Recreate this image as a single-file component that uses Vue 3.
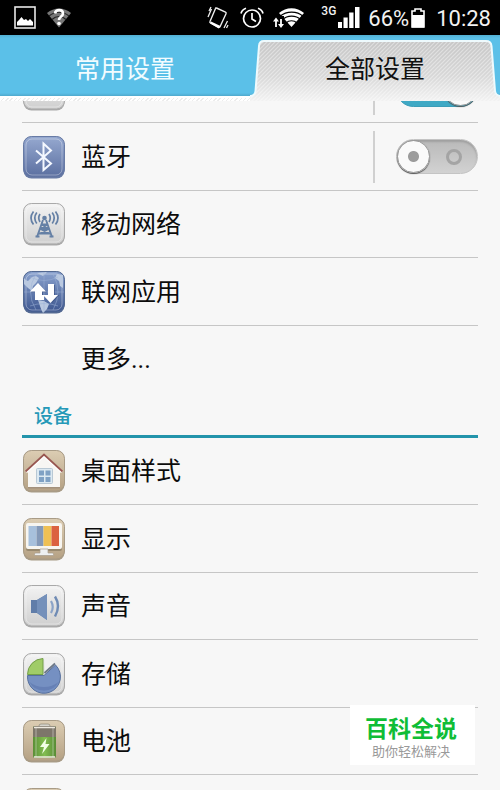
<template>
  <div class="phone">
    <header class="status-bar">
      <div class="status-left">
        <svg width="22" height="23" viewBox="0 0 22 23">
          <rect x="1" y="1" width="20" height="21" fill="none" stroke="#e8e8e8" stroke-width="1.6" />
          <path d="M3 19.500V16l2-2 2.500-3 2.500 3 2-1 2 2 2-2 3 3v3.500z" fill="#fff" />
        </svg>
        <svg width="24" height="20" viewBox="0 0 24 20">
          <path d="M0 5C7-1 17-1 24 5L12 19.500z" fill="#777" />
          <path d="M2 8c6-5 14-5 20 0M5 11.500c4-4 10-4 14 0" fill="none" stroke="#222" stroke-width="1.200" />
          <path d="M8 5.500c.5-4.500 8-4.500 8 0 0 3-4 3-4 6.500" fill="none" stroke="#fff" stroke-width="2.600" />
          <circle cx="12" cy="15.500" r="1.800" fill="#fff" />
        </svg>
      </div>
      <div class="status-right">
        <svg class="icon-vibrate" width="22" height="26" viewBox="0 0 22 26" fill="none" stroke="#eee">
          <path d="M9.500 3l9 4.200q1 .5.500 1.500l-6 13q-.5 1-1.500.5l-8-4.200q-1-.5-.5-1.500l5.500-13q.3-.9 1-.5z" stroke-width="1.400" />
          <path d="M4 16.500l9.500 4.500-1.700 2.500-8.600-5z" fill="#fff" stroke="none" />
          <path d="M1 12l3.500-8M2 6l2-4M17 23l3.500-7M19.500 23l1.500-3" stroke-width="1.300" />
        </svg>
        <svg class="icon-alarm" width="24" height="22" viewBox="0 0 24 22" fill="none" stroke="#fff" stroke-width="1.700">
          <circle cx="12" cy="11.500" r="8.500" />
          <path d="M12 6v6l4 2.500M1 6.500Q2 2.500 6 1.200M23 6.500Q22 2.500 18 1.200" />
        </svg>
        <svg class="icon-wifi" width="32" height="20" viewBox="0 0 32 20">
          <path d="M6 5C13-1.500 24-1.500 31 5L18.500 19z" fill="#fff" />
          <path d="M7 8.200c6.500-5.500 17-5.500 23 0M10 11.500c4-4.500 13-4.500 17.500 0M13 15c3-3 8-3 11 0" fill="none" stroke="#000" stroke-width="1.200" />
          <path d="M0 8h11v12H0z" fill="#000" />
          <path d="M3 19v-7M8 11v7" stroke="#fff" stroke-width="1.800" />
          <path d="M0 13.500l3-4 3 4zM5 16h6l-3 4z" fill="#fff" />
        </svg>
        <span class="network">3G</span>
        <svg class="icon-signal" width="22" height="21" viewBox="0 0 22 21" fill="#fff">
          <path d="M0 15h4v6H0zM5.500 10.500h4.200V21H5.500zM11.200 5.500h4.300V21h-4.300zM17 0h4.500v21H17z" />
        </svg>
        <span class="battery-level">66%</span>
        <svg class="icon-battery" width="14" height="20" viewBox="0 0 14 20">
          <path d="M1 19V3h3V1h6v2h3v16z" fill="#000" stroke="#fff" stroke-width="1.600" />
          <path d="M1 7h12v12.500H1z" fill="#fff" />
        </svg>
        <span class="clock">10:28</span>
      </div>
    </header>

    <nav class="tabs">
      <button class="tab" type="button">
        <span class="tab-text">常用设置</span>
      </button>
      <button class="tab active" type="button">
        <svg class="tab-shape" viewBox="0 0 250 66" preserveAspectRatio="none">
          <defs>
            <linearGradient id="tab-fill" x1="0" y1="0" x2="0" y2="1">
              <stop offset="0" stop-color="#c6c6c6" />
              <stop offset=".6" stop-color="#d8d8d8" />
              <stop offset="1" stop-color="#f2f2f2" />
            </linearGradient>
            <pattern id="tab-hatch" width="4" height="4" patternUnits="userSpaceOnUse">
              <path d="M-1 1l2-2M0 4l4-4M3 5l2-2" stroke="#fff" stroke-opacity=".4" stroke-width="1.200" />
            </pattern>
          </defs>
          <path d="M0 61q5 0 5.500-5l3.500-45q.3-5 5-5h222q5 0 5.500 5l3.500 45q.5 4 5 5v5H0z" fill="url(#tab-fill)" />
          <path d="M0 61q5 0 5.500-5l3.500-45q.3-5 5-5h222q5 0 5.500 5l3.500 45q.5 4 5 5v5H0z" fill="url(#tab-hatch)" />
          <path d="M0 61q5 0 5.500-5l3.500-45q.3-5 5-5h222q5 0 5.500 5l3.500 45q.5 4 5 5" fill="none" stroke="#eefafd" stroke-width="2" />
        </svg>
        <span class="tab-text">全部设置</span>
      </button>
    </nav>

    <main class="settings">
      <section v-for="group in groups" :key="group.id" class="group">
        <h2 v-if="group.title" class="group-title">{{ group.title }}</h2>
        <div v-for="item in group.items" :key="item.id" class="row">
          <component
            :is="item.toggle ? 'label' : 'a'"
            class="row-link"
            :for="item.toggle ? item.id : null"
            :href="item.toggle ? null : '#' + item.id"
          >
            <svg class="row-icon" viewBox="0 0 44 44">
              <template v-if="item.tile">
                <rect x="1.500" y="1.500" width="41" height="42" rx="8" :fill="edges[item.tile]" />
                <rect x="1.500" y="1.500" width="41" height="40.500" rx="8" :fill="`url(#tile-${item.tile})`" :stroke="edges[item.tile]" />
                <rect v-if="item.tile !== 'tan'" x="4" y="4" width="36" height="36" rx="6" fill="none" stroke="#fff" stroke-opacity=".35" />
              </template>

              <path v-if="item.id === 'bluetooth'" d="M14 15.500l15 13-7.500 6.500V8.500L29 15.500 14 28.500" fill="none" stroke="#f4f8ff" stroke-width="2" />

              <g v-else-if="item.id === 'mobile'" fill="none" stroke="#6580a5">
                <path d="M21 18l-6 17M24 18l6 17M20 22.500h5.500M18.500 27h8M17 31.500h11.500M20 22.500l6.500 4.500-9.500 5M25.500 22.500l-7 4.500 10 5" stroke-width="1.900" />
                <circle cx="22.500" cy="16" r="2.300" fill="#6580a5" stroke="none" />
                <path d="M13.500 33.500h4v2h-4zM27.500 33.500h4v2h-4z" fill="#6580a5" stroke="none" />
                <path d="M18 12q-2.500 4 0 8M27 12q2.500 4 0 8M14.800 10.500q-4 5.500 0 11M30.200 10.500q4 5.500 0 11M11.500 9.500q-5 6.500 0 13M33.500 9.500q5 6.500 0 13" stroke-width="1.700" />
              </g>

              <g v-else-if="item.id === 'apps'">
                <path d="M2 8q2 3 4 3l4-4 4-1 3 2-3 5-3 3-1 5-4-3-4-4zM15 3l10-1-4 4zM35 4l6 1v13l-3-2-1-5-4-3zM16 30l6 1 5 3-2 5-4 4-2-4z" fill="#bac9e0" />
                <path d="M22 2v40M2 22h40M8 7q14 7 28 0M8 36q14-5 28 0M14 4q-11 18 0 36M31 4q10 18 0 36" fill="none" stroke="#9bb2d5" stroke-opacity=".5" />
                <path d="M17 14l8 8.500h-4V30h-8v-7.500H9zM26 15h7v10h4.500L30 33l-7.500-8H26z" fill="#2a3f72" opacity=".5" />
                <path d="M16 13l8 8.500h-4V25h2v5h-9v-8.500H8zM26 14h6v11h4l-7.500 8L21 25h5z" fill="#fff" />
              </g>

              <g v-else-if="item.id === 'desktop'">
                <path d="M6 21L22 7l16 14v17H6z" fill="#f7f6f3" />
                <path d="M6 38h32v1.500H6z" fill="#a3917c" />
                <path d="M4 23L22 6.500 40 23" fill="none" stroke="#fff" stroke-width="3" />
                <path d="M3.500 22.500L22 5.500l18.500 17" fill="none" stroke="#985750" stroke-width="1.800" />
                <rect x="14.500" y="19.500" width="16" height="15" rx="1" fill="#dce9f1" stroke="#b8c8d4" />
                <path d="M17 21.500h5v5h-5zM23.500 21.500h5v5h-5zM17 28h5v5h-5zM23.500 28h5v5h-5z" fill="#7fa1c4" />
              </g>

              <g v-else-if="item.id === 'display'">
                <rect x="4" y="7" width="36" height="27" rx="2" fill="#98896f" />
                <rect x="4" y="6" width="36" height="26" rx="2" fill="#f7f5f0" />
                <path d="M6.500 9h8v20h-8z" fill="#a7c0dc" />
                <path d="M14.500 9h7v20h-7z" fill="#8499b8" />
                <path d="M21.500 9h8v20h-8z" fill="#efc054" />
                <path d="M29.500 9h7.500v20h-7.500z" fill="#db6140" />
                <path d="M18 32h8v4h4.500q1 0 1 1.500v1h-19v-1q0-1.500 1-1.500H18z" fill="#eef0f1" stroke="#a69c8d" stroke-width=".7" />
              </g>

              <g v-else-if="item.id === 'sound'">
                <path d="M9 16h6l10-6v26l-10-7H9z" fill="#607da9" />
                <path d="M15 16l10-6v26l-10-7z" fill="#7490ba" />
                <path d="M29 17q3.500 6 0 12" fill="none" stroke="#8ba3c7" stroke-width="2.200" />
                <path d="M33 12.500q6 9.500 0 20" fill="none" stroke="#6f8bb4" stroke-width="2.400" />
              </g>

              <g v-else-if="item.id === 'storage'">
                <path d="M22 23.500L33.500 13A16.500 16.500 0 1 1 5.500 23.500z" fill="#7590c2" stroke="#56709e" />
                <path d="M7.500 30a16 15 0 0 0 29 0a20 16 0 0 1-29 0z" fill="#5b77ad" opacity=".6" />
                <path d="M21 22.500V6.500A16 16 0 0 0 5.500 22.500z" fill="#a0cc68" stroke="#739f48" />
                <path d="M23 20V7a15 15 0 0 1 9.500 4z" fill="#eff0f0" />
                <path d="M22.500 21L33 11.500" stroke="#6c7887" stroke-width="1.800" />
              </g>

              <g v-else-if="item.id === 'battery'">
                <rect x="17" y="5" width="11" height="4" rx="2" fill="#d6d4cc" stroke="#8d8676" stroke-width=".7" />
                <rect x="11" y="7" width="23" height="32" rx="2" fill="url(#cell)" />
                <path d="M11 9q0-2 2-2h19q2 0 2 2v9H11z" fill="#7d766a" />
                <path d="M12 8.500h21M12 38h21" stroke="#eee9df" stroke-width="1.300" />
                <path d="M14 9v29M31 9v29" stroke="#fff" stroke-opacity=".2" stroke-width="2" />
                <path d="M24.500 19L18 28h4l-2 7 7.500-10h-4z" fill="#f1ffe6" />
              </g>
            </svg>
            <span v-if="item.name" class="row-name">{{ item.name }}</span>
          </component>
          <div v-if="item.toggle" class="row-switch">
            <input :id="item.id" v-model="item.on" class="switch" type="checkbox">
          </div>
        </div>
      </section>
    </main>

    <aside class="watermark">
      <strong>百科全说</strong>
      <span>助你轻松解决</span>
    </aside>

    <svg class="shared-defs" width="0" height="0">
      <defs>
        <linearGradient id="tile-blue" x1="0" y1="0" x2="0" y2="1">
          <stop offset="0" stop-color="#96a9d0" />
          <stop offset="1" stop-color="#5b6fa0" />
        </linearGradient>
        <linearGradient id="tile-globe" x1="0" y1="0" x2="0" y2="1">
          <stop offset="0" stop-color="#8aa2ce" />
          <stop offset="1" stop-color="#3e5790" />
        </linearGradient>
        <linearGradient id="tile-gray" x1="0" y1="0" x2="0" y2="1">
          <stop offset="0" stop-color="#f3f3f3" />
          <stop offset="1" stop-color="#cfcfcf" />
        </linearGradient>
        <linearGradient id="tile-tan" x1="0" y1="0" x2="0" y2="1">
          <stop offset="0" stop-color="#dccdb3" />
          <stop offset="1" stop-color="#b5a184" />
        </linearGradient>
        <linearGradient id="cell" x1="0" y1="0" x2="1" y2="0">
          <stop offset="0" stop-color="#5b8f37" />
          <stop offset=".5" stop-color="#82bd50" />
          <stop offset="1" stop-color="#588b36" />
        </linearGradient>
      </defs>
    </svg>
  </div>
</template>

<script setup>
import { ref } from 'vue'

const edges = {
  blue: '#687ba5',
  globe: '#536992',
  gray: '#a9a9a9',
  tan: '#a89b86'
}

const groups = ref([
  {
    id: 'network',
    title: '',
    items: [
      { id: 'wifi', name: '', tile: 'gray', toggle: true, on: true },
      { id: 'bluetooth', name: '蓝牙', tile: 'blue', toggle: true, on: false },
      { id: 'mobile', name: '移动网络', tile: 'gray' },
      { id: 'apps', name: '联网应用', tile: 'globe' },
      { id: 'more', name: '更多...', tile: '' }
    ]
  },
  {
    id: 'device',
    title: '设备',
    items: [
      { id: 'desktop', name: '桌面样式', tile: 'tan' },
      { id: 'display', name: '显示', tile: 'tan' },
      { id: 'sound', name: '声音', tile: 'gray' },
      { id: 'storage', name: '存储', tile: 'gray' },
      { id: 'battery', name: '电池', tile: 'tan' },
      { id: 'next', name: '', tile: 'tan' }
    ]
  }
])
</script>

<style>
body {
  margin: 0;
  background: #f7f7f7;
}
</style>

<style scoped>
.phone {
  position: relative;
  display: flex;
  flex-direction: column;
  height: 100vh;
  overflow: hidden;
  background: #f7f7f7;
  color: #0c0c0c;
  font-family: Roboto, "Noto Sans CJK SC", sans-serif;
}

.status-bar {
  display: flex;
  flex-shrink: 0;
  align-items: center;
  justify-content: space-between;
  height: 35px;
  padding: 0 9px 0 14px;
  background: #000;
  color: #f2f2f2;
}

.status-left,
.status-right {
  display: flex;
  align-items: center;
}

.status-left {
  gap: 11px;
}

.icon-vibrate {
  margin-right: 11px;
}

.icon-alarm {
  margin-right: 9px;
}

.icon-wifi {
  margin-right: 16px;
}

.network {
  align-self: flex-start;
  margin-right: 2px;
  padding-top: 3px;
  font-size: 12px;
  font-weight: 500;
  line-height: 16px;
}

.icon-signal {
  margin-right: 8px;
}

.battery-level,
.clock {
  padding-top: 2px;
  font-size: 22px;
  line-height: 33px;
}

.battery-level {
  margin-right: 2px;
}

.icon-battery {
  margin-right: 11px;
}

.tabs {
  display: grid;
  flex-shrink: 0;
  grid-template-columns: 1fr 1fr;
  height: 66px;
  background:
    linear-gradient(#52afd2, #5bc0e8 3px, #5bc0e8 58px, #4fa9cd 61px) top / 100% 61px no-repeat,
    linear-gradient(#fff 2px, transparent 2px) bottom / 100% 5px no-repeat,
    repeating-linear-gradient(135deg, #fff 0 2px, #ececec 2px 3px);
}

.tab {
  position: relative;
  padding: 4px 0 0;
  border: 0;
  background: none;
  color: #f2fcff;
  font-family: inherit;
  font-size: 25px;
  line-height: 62px;
}

.tab.active {
  color: #111;
}

.tab-shape {
  position: absolute;
  inset: 0;
  width: 100%;
  height: 100%;
}

.tab-text {
  position: relative;
}

.settings {
  flex: 1;
  min-height: 0;
  padding: 0 22px;
  overflow: hidden;
}

/* the list is scrolled down, its first row is half under the tabs */
.group:first-child {
  margin-top: -45px;
}

.group-title {
  box-sizing: border-box;
  height: 45px;
  margin: 0;
  padding: 4px 12px 0;
  border-bottom: 3px solid #2394ab;
  color: #2599b8;
  font-size: 19px;
  font-weight: 500;
  line-height: 40px;
}

.row {
  display: flex;
  align-items: center;
  box-sizing: border-box;
  height: 68px;
  border-bottom: 1px solid #c6c6c6;
}

.row:nth-of-type(odd) {
  height: 67px;
}

.group:first-child .row:last-child {
  border-bottom-color: transparent;
}

.row-link {
  display: flex;
  flex: 1;
  align-items: center;
  gap: 15px;
  color: inherit;
  text-decoration: none;
}

.row-icon {
  flex-shrink: 0;
  width: 44px;
  height: 44px;
}

.row-name {
  padding-top: 2px;
  font-size: 25px;
  line-height: 36px;
}

.row-switch {
  display: flex;
  align-items: center;
  height: 52px;
  padding-left: 21px;
  border-left: 2px solid #d0d0d0;
}

.switch {
  position: relative;
  box-sizing: border-box;
  width: 82px;
  height: 35px;
  margin: 0;
  border: 1px solid #c4c4c4;
  border-radius: 18px;
  appearance: none;
  background: linear-gradient(#b9b9b9, #d2d2d2);
  box-shadow: inset 0 2px 2px #a0a0a0;
}

.switch::before {
  content: '';
  position: absolute;
  top: 0;
  left: 0;
  box-sizing: border-box;
  width: 33px;
  height: 33px;
  border: 1px solid #999;
  border-radius: 50%;
  background: radial-gradient(circle, #9c9c9c 5px, #fafafa 6px);
  box-shadow: 0 1px 1px #555;
}

.switch::after {
  content: '';
  position: absolute;
  top: 9px;
  right: 15px;
  box-sizing: border-box;
  width: 16px;
  height: 16px;
  border: 3px solid #a4a4a4;
  border-radius: 50%;
}

.switch:checked {
  border-color: #3b9db8;
  background: #3fa9c5;
  box-shadow: none;
}

.switch:checked::before {
  right: 0;
  left: auto;
}

.switch:checked::after {
  right: auto;
  left: 15px;
}

.watermark {
  position: absolute;
  right: 25px;
  bottom: 25px;
  display: flex;
  flex-direction: column;
  align-items: center;
  box-sizing: border-box;
  width: 125px;
  height: 60px;
  padding: 9px 3px 0 0;
  background: #fff;
}

.watermark strong {
  color: #0fbd36;
  font-size: 23px;
  font-weight: 700;
  line-height: 32px;
}

.watermark span {
  color: #999;
  font-size: 13px;
  line-height: 12px;
}

.shared-defs {
  position: absolute;
}
</style>
